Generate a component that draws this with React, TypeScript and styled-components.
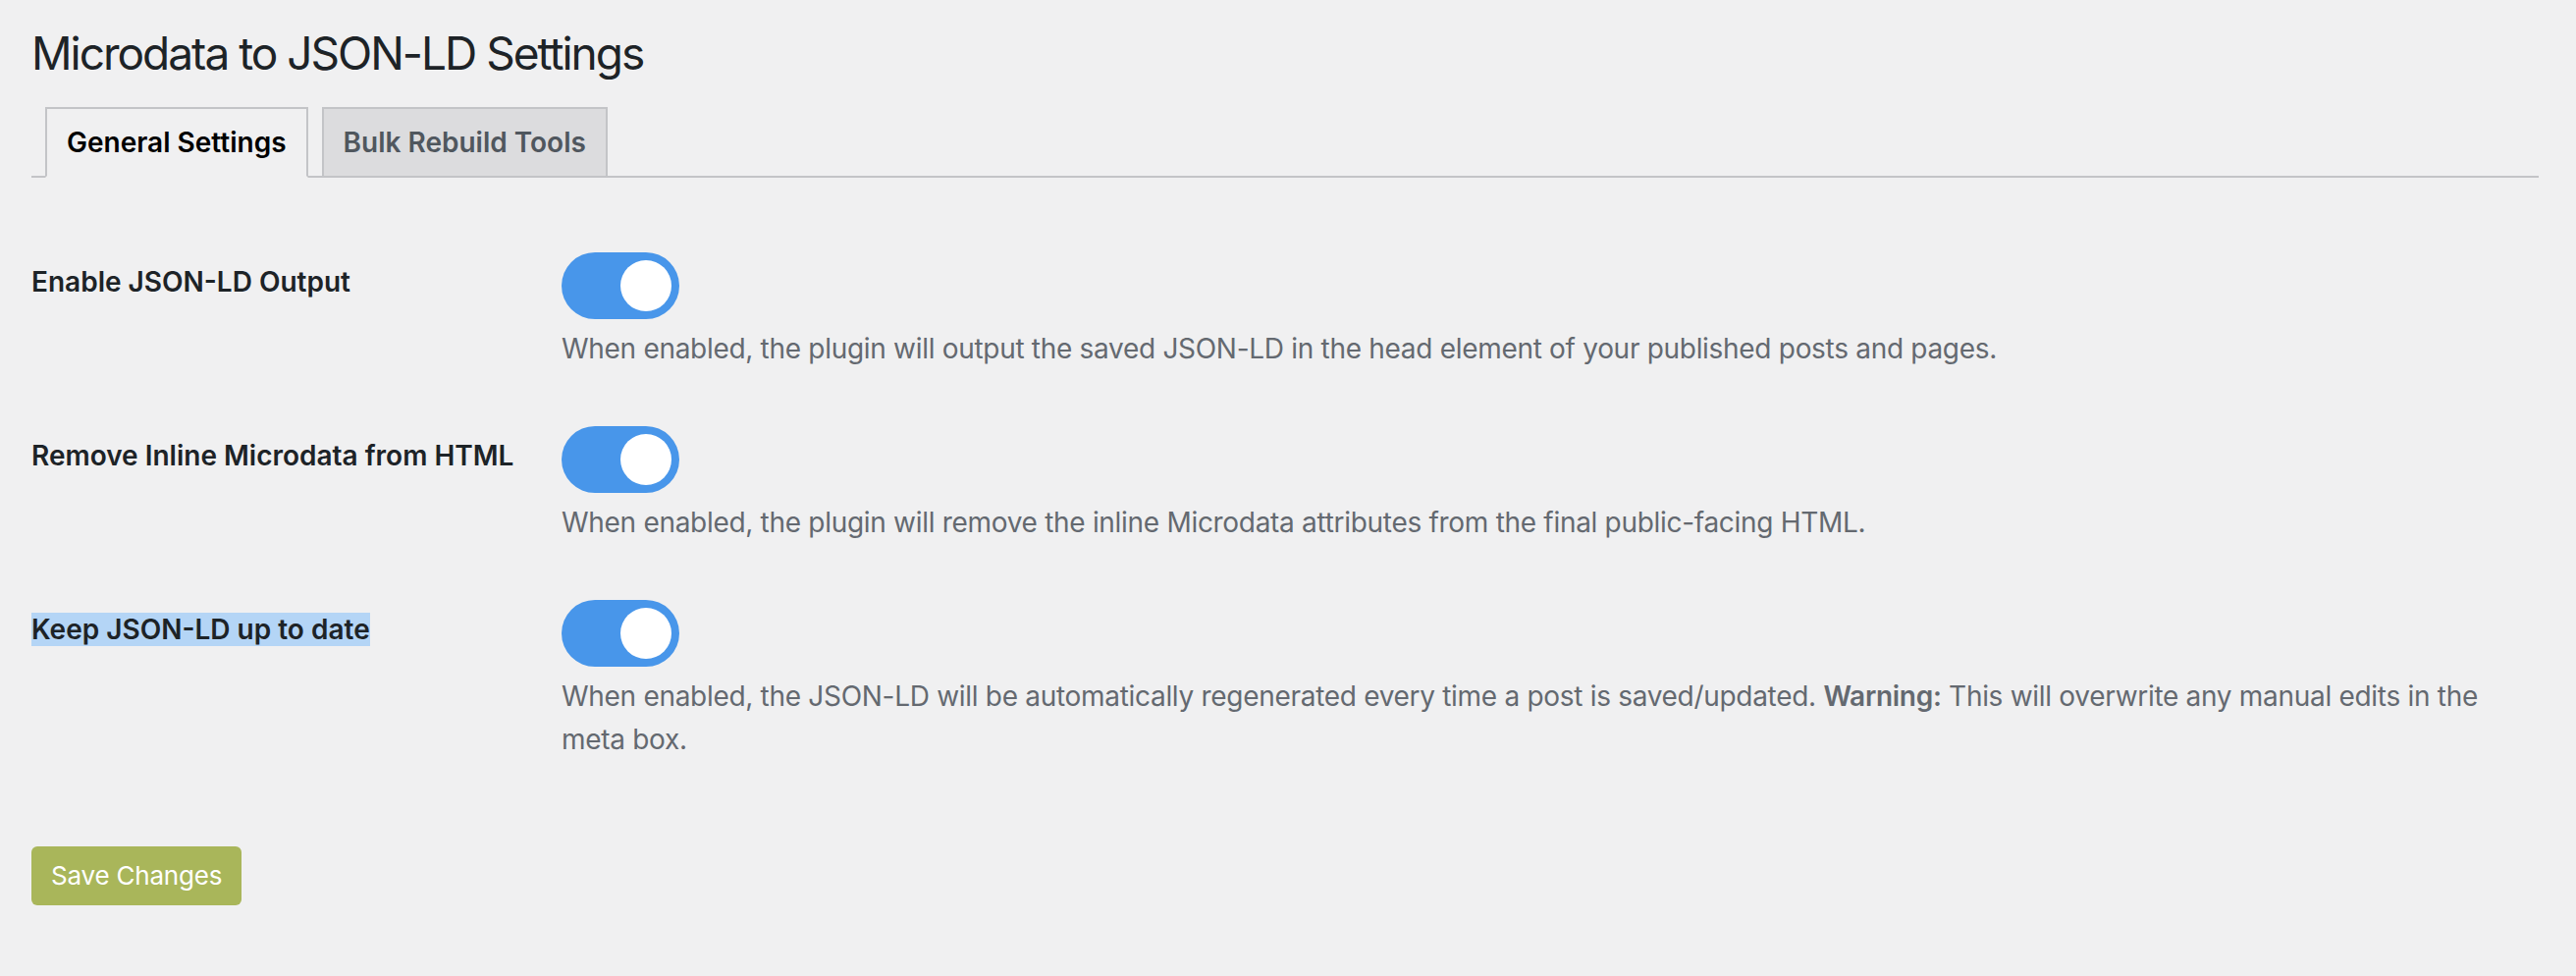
import React from "react";
import styled, { createGlobalStyle } from "styled-components";

const GlobalStyle = createGlobalStyle`
  html, body {
    margin: 0;
    padding: 0;
    background: #f0f0f1;
  }
  body {
    font-family: Inter, "Noto Sans", "Liberation Sans", sans-serif;
    color: #1d2327;
  }
  * { box-sizing: border-box; }
`;

const Wrap = styled.div`
  padding: 0 38px 0 32px;
  min-height: 994px;
`;

const Title = styled.h1`
  margin: 24px 0 0;
  padding: 0 0 8px;
  font-size: 46px;
  font-weight: 400;
  line-height: 60px;
  letter-spacing: -2px;
  color: #1d2327;
`;

const TabBar = styled.nav`
  display: flex;
  align-items: flex-end;
  padding-top: 17px;
  border-bottom: 2px solid #c3c4c7;
`;

const Tab = styled.a<{ $active?: boolean }>`
  display: block;
  margin-left: 14px;
  padding: 10px 20px;
  font-size: 28px;
  line-height: 48px;
  font-weight: 600;
  white-space: nowrap;
  text-decoration: none;
  cursor: pointer;
  border: 2px solid #c3c4c7;
  border-bottom: ${(p) => (p.$active ? "2px solid #f0f0f1" : "none")};
  margin-bottom: ${(p) => (p.$active ? "-2px" : "0")};
  background: ${(p) => (p.$active ? "#f0f0f1" : "#dcdcde")};
  color: ${(p) => (p.$active ? "#000" : "#50575e")};
`;

const Form = styled.form`
  margin-top: 47px;
`;

const Row = styled.div`
  display: grid;
  grid-template-columns: 540px 1fr;
  padding: 29px 20px 28px 0;
`;

const Label = styled.div`
  padding-top: 12px;
  font-size: 28px;
  line-height: 36px;
  font-weight: 600;
  color: #1d2327;
`;

const Selected = styled.span`
  background: #b4d5f6;
`;

const Control = styled.div`
  display: flex;
  flex-direction: column;
  align-items: flex-start;
`;

const Switch = styled.span<{ $on?: boolean }>`
  display: flex;
  align-items: center;
  justify-content: ${(p) => (p.$on ? "flex-end" : "flex-start")};
  width: 120px;
  height: 68px;
  padding: 0 8px;
  border-radius: 34px;
  background: ${(p) => (p.$on ? "#4896ea" : "#c3c4c7")};
  cursor: pointer;
`;

const Knob = styled.span`
  width: 52px;
  height: 52px;
  border-radius: 50%;
  background: #ffffff;
`;

const Description = styled.p`
  margin: 8px 0 0;
  font-size: 28px;
  line-height: 44px;
  font-weight: 400;
  letter-spacing: -0.3px;
  color: #646970;

  strong {
    font-weight: 600;
  }
`;

const Submit = styled.div`
  margin-top: 59px;
`;

const PrimaryButton = styled.button`
  height: 60px;
  padding: 0 20px;
  border: 0;
  border-radius: 6px;
  background: #a9b65a;
  color: #ffffff;
  font-family: inherit;
  font-size: 26px;
  line-height: 60px;
  font-weight: 400;
  letter-spacing: -0.2px;
  cursor: pointer;
`;

type Setting = {
  label: React.ReactNode;
  description: React.ReactNode;
};

const settings: Setting[] = [
  {
    label: "Enable JSON-LD Output",
    description:
      "When enabled, the plugin will output the saved JSON-LD in the head element of your published posts and pages.",
  },
  {
    label: "Remove Inline Microdata from HTML",
    description:
      "When enabled, the plugin will remove the inline Microdata attributes from the final public-facing HTML.",
  },
  {
    label: <Selected>Keep JSON-LD up to date</Selected>,
    description: (
      <>
        When enabled, the JSON-LD will be automatically regenerated every time a post is
        saved/updated. <strong>Warning:</strong> This will overwrite any manual edits in the
        meta box.
      </>
    ),
  },
];

export default function App() {
  return (
    <>
      <GlobalStyle />
      <Wrap>
        <Title>Microdata to JSON-LD Settings</Title>
        <TabBar>
          <Tab $active>General Settings</Tab>
          <Tab>Bulk Rebuild Tools</Tab>
        </TabBar>
        <Form onSubmit={(e) => e.preventDefault()}>
          {settings.map((s, i) => (
            <Row key={i}>
              <Label>{s.label}</Label>
              <Control>
                <Switch $on role="switch" aria-checked="true">
                  <Knob />
                </Switch>
                <Description>{s.description}</Description>
              </Control>
            </Row>
          ))}
          <Submit>
            <PrimaryButton type="submit">Save Changes</PrimaryButton>
          </Submit>
        </Form>
      </Wrap>
    </>
  );
}
